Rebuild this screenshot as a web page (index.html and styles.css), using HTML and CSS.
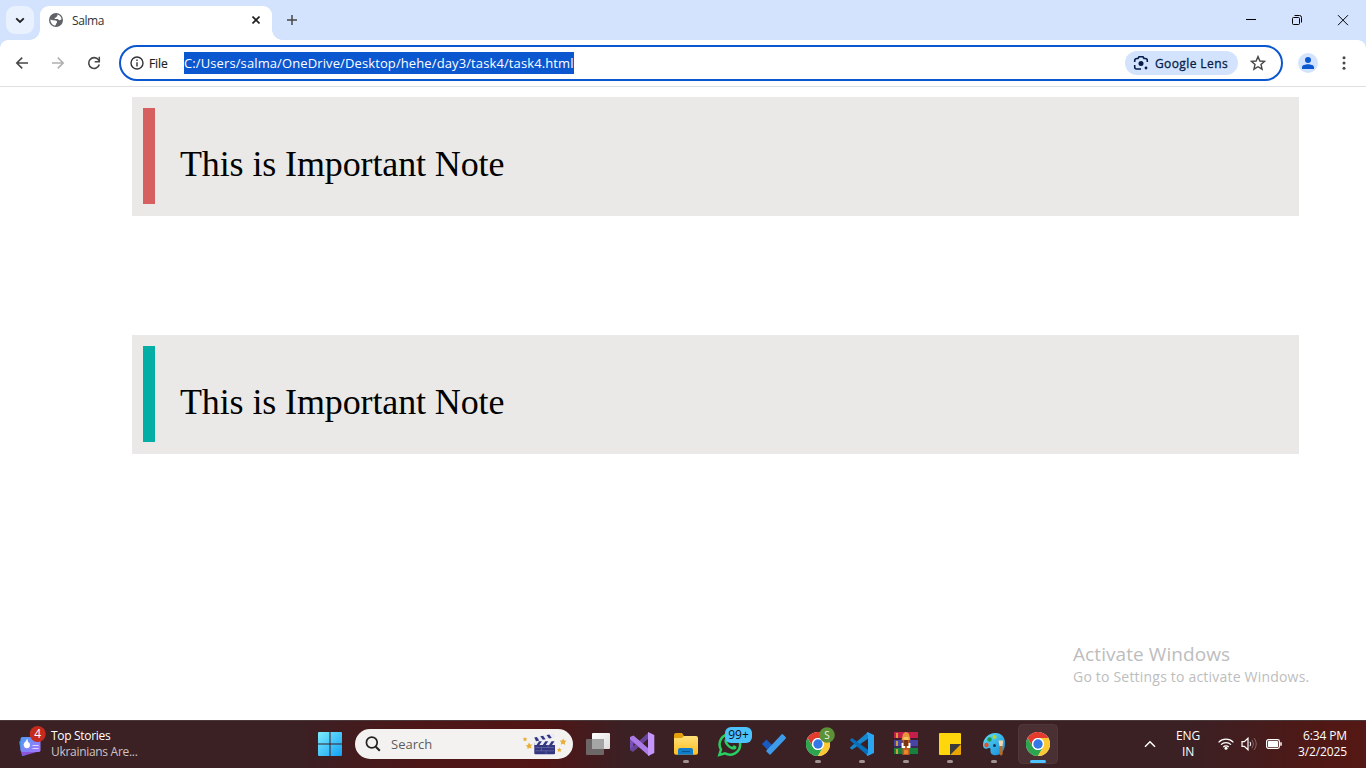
FILE: index.html
```html
<!DOCTYPE html>
<html lang="en">
<head>
<meta charset="utf-8">
<title>Salma</title>
<link rel="stylesheet" href="styles.css">
</head>
<body>
<svg class="defs" width="0" height="0" aria-hidden="true">
  <defs>
    <linearGradient id="win" x1="0" y1="0" x2="1" y2="1"><stop offset="0" stop-color="#7cecfd"/><stop offset="1" stop-color="#12a0f5"/></linearGradient>
    <linearGradient id="folder" x1="0" y1="0" x2="0" y2="1"><stop offset="0" stop-color="#ffe07a"/><stop offset="1" stop-color="#ffbe1e"/></linearGradient>
    <linearGradient id="news" x1="0" y1="0" x2="1" y2="1"><stop offset="0" stop-color="#4d9cf5"/><stop offset="1" stop-color="#a874ff"/></linearGradient>
    <linearGradient id="paint" x1="0" y1="0" x2="1" y2="1"><stop offset="0" stop-color="#5fe0f8"/><stop offset="1" stop-color="#1489d8"/></linearGradient>
    <linearGradient id="view" x1="0" y1="0" x2="1" y2="1"><stop offset="0" stop-color="#ffffff"/><stop offset="1" stop-color="#dcdcdc"/></linearGradient>
    <symbol id="chrome" viewBox="0 0 24 24">
      <circle cx="12" cy="12" r="12" fill="#fff"/>
      <path d="M1.6 6A12 12 0 0 1 22.4 6H12a6 6 0 0 0-5.2 9z" fill="#e33b2e"/>
      <path d="M1.6 6A12 12 0 0 0 12 24l5.2-9a6 6 0 0 1-10.4 0z" fill="#2da44e"/>
      <path d="M22.4 6A12 12 0 0 1 12 24l5.2-9A6 6 0 0 0 12 6z" fill="#fcc934"/>
      <circle cx="12" cy="12" r="5.9" fill="#fff"/><circle cx="12" cy="12" r="4.7" fill="#3478e8"/>
    </symbol>
  </defs>
</svg>
<div class="screen">
  <header class="tabstrip">
    <button class="tab-search"><svg width="10" height="7" viewBox="0 0 10 7"><path d="M1.2 1.3 5 5l3.8-3.7" fill="none" stroke="#1f1f1f" stroke-width="1.8"/></svg></button>
    <div class="tab">
      <svg class="globe" width="14" height="14" viewBox="0 0 14 14"><circle cx="7" cy="7" r="7" fill="#5f6368"/><path d="M8.300 1.500C10.500 2 12.300 3.700 12.600 6.200L10.800 7.200C9.800 7.300 9.400 6.500 8.700 6H5.800L5.600 4.900C6.400 4.600 7.400 4.800 7.700 3.600 8.500 3.300 8.700 2.500 8.300 1.500ZM1.400 6.400 3.800 7.300 6.500 7.500C7.800 7.800 8.400 8.700 7.900 9.700 7 10.200 7.200 11.500 6.300 12.500 3.500 12.300 1.400 9.800 1.400 6.400Z" fill="#fff"/></svg>
      <span class="tab-title">Salma</span>
      <svg class="tab-close" width="8" height="8" viewBox="0 0 8 8"><path d="M.5.5l7 7M7.500.5l-7 7" stroke="#1f1f1f" stroke-width="1.600"/></svg>
    </div>
    <svg class="new-tab" width="10" height="10" viewBox="0 0 10 10"><path d="M5 0v10M0 5h10" stroke="#474747" stroke-width="1.500"/></svg>
    <div class="window-controls">
      <svg width="46" height="40" viewBox="0 0 46 40"><path d="M18 19.500h10" stroke="#000"/></svg>
      <svg width="46" height="40" viewBox="0 0 46 40"><g fill="none" stroke="#000"><rect x="18.500" y="17.500" width="7" height="7" rx="1"/><path d="M20.500 15.500H25.500A2 2 0 0 1 27.500 17.500V22.500"/></g></svg>
      <svg width="46" height="40" viewBox="0 0 46 40"><path d="M18 15.200l10 10M28 15.200l-10 10" stroke="#000"/></svg>
    </div>
  </header>
  <nav class="toolbar">
    <svg class="nav-icon" width="14" height="14" viewBox="0 0 14 14"><path d="M13 7H2M7.200 1.600 1.800 7l5.400 5.400" fill="none" stroke="#474747" stroke-width="1.600"/></svg>
    <svg class="nav-icon" width="14" height="14" viewBox="0 0 14 14"><path d="M1 7h11M6.800 1.600 12.200 7l-5.400 5.400" fill="none" stroke="#b0b0b0" stroke-width="1.600"/></svg>
    <svg class="nav-icon" width="14" height="14" viewBox="0 0 14 14"><path d="M12.300 8.500A5.400 5.400 0 1 1 11.500 3.900L12.700 5" fill="none" stroke="#474747" stroke-width="1.600"/><path d="M12.300.8v4.900H7.700" fill="none" stroke="#474747" stroke-width="1.500"/></svg>
    <div class="omnibox">
      <svg width="14" height="14" viewBox="0 0 14 14"><circle cx="7" cy="7" r="6" fill="none" stroke="#303236" stroke-width="1.400"/><path d="M7 6.200v4.200M7 3.400v1.500" stroke="#303236" stroke-width="1.400"/></svg>
      <span class="scheme">File</span>
      <span class="url">C:/Users/salma/OneDrive/Desktop/hehe/day3/task4/task4.html</span>
      <div class="lens">
        <svg width="16" height="16" viewBox="0 0 16 16"><path d="M1.700 7V5.500A2 2 0 0 1 3.700 3.500H5L6 1.800h4l1 1.700h1.300a2 2 0 0 1 2 2V7M1.700 10v2a2 2 0 0 0 2 2H8" fill="none" stroke="#041e49" stroke-width="1.600"/><circle cx="8" cy="8.500" r="2.500" fill="#041e49"/><circle cx="13" cy="13" r="1.400" fill="#041e49"/></svg>
        <span>Google Lens</span>
      </div>
      <svg class="star" width="16" height="16" viewBox="0 0 16 16"><path d="M8 1.600 9.900 6l4.700.4L11 9.500l1.100 4.700L8 11.700l-4.100 2.500L5 9.500 1.400 6.400 6.100 6z" fill="none" stroke="#474747" stroke-width="1.400"/></svg>
    </div>
    <svg class="avatar" width="20" height="20" viewBox="0 0 20 20"><circle cx="10" cy="10" r="10" fill="#d3e3fd"/><circle cx="10" cy="7" r="3" fill="#0b57d0"/><path d="M4 16v-1.800C4 12.200 7.500 11.300 10 11.300s6 .9 6 2.900V16z" fill="#0b57d0"/></svg>
    <svg class="menu" width="4" height="14" viewBox="0 0 4 14" fill="#474747"><circle cx="2" cy="1.800" r="1.500"/><circle cx="2" cy="7" r="1.500"/><circle cx="2" cy="12.200" r="1.500"/></svg>
  </nav>

  <main class="page">
    <section class="note note-danger"><p>This is Important Note</p></section>
    <section class="note note-info"><p>This is Important Note</p></section>
    <aside class="watermark"><div class="wm-title">Activate Windows</div><div class="wm-text">Go to Settings to activate Windows.</div></aside>
  </main>

  <footer class="taskbar">
    <div class="widgets">
      <svg width="30" height="40" viewBox="0 -4 30 40"><path d="M2 14 7 9l2 18-4 1z" fill="#2788c9"/><path d="M3.500 19 20 15l3.500 8-18 5z" fill="#8a55dc"/><rect x="3.500" y="9" width="20" height="15" rx="2" fill="url(#news)"/><path d="M10 10.500c-.2 3-4 4-3.200 7.200C7.600 21.300 13 21 13 17c0-1.500-.8-2-1-3-.8.300-1 .8-1 1.200.2-2-.4-3.700-1-4.700z" fill="#fff"/><path d="M15.500 17.500h6M15.500 20.500h6" stroke="#e3d5ff" stroke-width="1.200"/><circle cx="20.700" cy="6" r="8" fill="#c42b1c"/><text class="badge-text" x="20.700" y="10.300" fill="#fff">4</text></svg>
      <div class="widget-copy"><div class="wt">Top Stories</div><div class="ws">Ukrainians Are...</div></div>
    </div>
    <svg class="start" width="24" height="24" viewBox="0 0 24 24" fill="url(#win)"><path d="M0 1q0-1 1-1h10.500v11.500H0zM12.500 0H23q1 0 1 1v10.500H12.500zM0 12.500h11.500V24H1q-1 0-1-1zM12.500 12.500H24V23q0 1-1 1H12.500z"/></svg>
    <div class="search">
      <svg width="16" height="16" viewBox="0 0 16 16"><circle cx="6.800" cy="6.500" r="5.400" fill="none" stroke="#222" stroke-width="1.700"/><path d="M10.800 10.800l4 4" stroke="#222" stroke-width="2"/></svg>
      <span>Search</span>
      <svg class="clapper" width="46" height="24" viewBox="0 0 46 24">
        <g fill="#e9ae38"><path d="M7 10.500l1 2.100 2.400-.2-1.500 1.900.8 2.300-2.300-.8-1.900 1.500v-2.400l-2-1.300 2.300-.7zM3 5l.7 1.300 1.700.1-1.200 1.200.3 1.700-1.500-.7-1.500.7.300-1.700L.6 6.400l1.700-.1zM41.300 6.500l.9 2.100 2.300.2-1.700 1.700.4 2.400-2.100-1.100-2.200 1 .4-2.300-1.600-1.700 2.300-.3zM37.300 15.500l.7 1.400 1.600.2-1.100 1.200.3 1.600-1.500-.7-1.500.7.300-1.600-1.100-1.300 1.600-.1z"/></g>
        <path d="M12.300 11H33V21.300q0 1-1 1H13.300q-1 0-1-1z" fill="#34367f"/>
        <path d="M13.500 15.500h18.500M13.500 18.800h18.500M19.500 15.500v3.300M26 12.500V15.500M24 18.800v3" stroke="#7079b4" stroke-width=".6"/>
        <path d="M12.300 5.500 32 1.500l.8 3.700L13 9.500z" fill="#e9ebf5"/><path d="M12.300 9.300H33v3.700H12.300z" fill="#e9ebf5"/>
        <path d="M12.300 5.500l2.500-.5 2.500 3.500-3.200.8zM18.300 4.300l2.800-.6 2.500 3.500-2.800.6zM24.500 3l2.800-.6 2.500 3.500-2.800.6zM14.500 13l2.500-3.700h2.900L17.400 13zM20.800 13l2.500-3.700h2.900L23.700 13zM27.100 13l2.500-3.700h2.900L30 13z" fill="#34367f"/>
      </svg>
    </div>
    <div class="apps">
      <svg class="app" viewBox="0 0 44 48"><rect x="16" y="13" width="18" height="16" rx="1" fill="url(#view)"/><rect x="10" y="19" width="18" height="16" rx="1" fill="#6d6867"/><path d="M16 19h12v10H16z" fill="#a6a5a5"/></svg>
      <svg class="app" viewBox="0 0 44 48"><path d="M10 18l3-2 17 14v6L13.500 23 13 31l-3-1z" fill="#7851b5"/><path d="M10 30l3 2L29 18v-6L10 29z" fill="#694599"/><path d="M10 17l3.500-1.500L29 29v7L10 19z" fill="#ad7be5"/><path d="M28 12l6.300 3v18L28 36z" fill="#c596fa"/></svg>
      <svg class="app" viewBox="0 0 44 48"><path d="M10 15q0-2 2-2h6l2 3v4H10z" fill="#e3a009"/><path d="M10 18h8l2-2h12q2 0 2 2v15q0 1.700-2 1.700H12q-2 0-2-1.700z" fill="url(#folder)"/><path d="M14 34.700V30q0-2 2-2h11q2 0 2 2v4.700z" fill="#117cc9"/><path d="M18 31.500h8" stroke="#075493"/><rect x="19" y="40" width="6" height="3" rx="1.500" fill="#a09294"/></svg>
      <svg class="app" viewBox="0 0 44 48"><path d="M11.300 35 13 29.500A10.300 10.300 0 1 1 17 33.400z" fill="none" stroke="#29ce62" stroke-width="2.500"/><path d="M17 19c1.500-2 2.700-.8 3.300 1.500L19.200 22c1.500 3 3 4 5 4.800l1.500-1.600c3 1 3.200 1.800 2.500 3.200-2 2.500-6 .8-8.700-2-2.500-2.600-4-5.400-2.500-7.400z" fill="#29ce62"/><rect x="17" y="7" width="27" height="16" rx="6" fill="#4cc2ff"/><text class="badge-text" x="30.500" y="19.200" fill="#111">99+</text></svg>
      <svg class="app" viewBox="0 0 44 48"><path d="M10 24l4.500-4.500 7.700 7.700-4.500 5z" fill="#185abd"/><path d="M17.500 34.500 14 31 29.500 14.500q.8-.8 1.600 0l2.500 2.600q.8.800 0 1.600L19 34q-.8 1-1.500.5z" fill="#3e9bea"/></svg>
      <svg class="app" viewBox="0 0 44 48"><use href="#chrome" x="10" y="12" width="24" height="24"/><circle cx="31" cy="15" r="7.800" fill="#5c9138"/><text class="s-text" x="31" y="18.500" fill="#e9f3e4">S</text><rect x="19" y="40" width="6" height="3" rx="1.500" fill="#a09294"/></svg>
      <svg class="app" viewBox="0 0 44 48"><path d="M28 12l-17.500 15q-.8.800 0 1.500l1.500 1.300L29 18z" fill="#1687cf"/><path d="M28 36 10.500 20.700q-.8-.8 0-1.500L12 18l17 12.500z" fill="#0870bb"/><path d="M27.500 12 34 15v18l-6.500 3-1-1.500 1.500-1.500V15l-1.500-1.500z" fill="#2ba5ef"/><rect x="19" y="40" width="6" height="3" rx="1.500" fill="#a09294"/></svg>
      <svg class="app" viewBox="0 0 44 48"><rect x="10" y="12" width="24" height="7" fill="#c51e4b"/><rect x="10" y="20" width="24" height="7.500" fill="#4844a5"/><rect x="10" y="28" width="24" height="7" fill="#18803d"/><path d="M13 13v5M13 21v5M13 29v5" stroke="#d6a83b" stroke-width="1.800"/><path d="M10 18.500h24M10 26.800h24M10 34.500h24" stroke="#29152b" stroke-width=".8"/><rect x="18.500" y="19" width="7" height="16" fill="#c25b20"/><path d="M19 14q3-4 6 0l1.500 6h-9z" fill="#e6953a"/><path d="M19.500 17h5v3h-5z" fill="#f5c162"/><path d="M20 20h4v6h-4z" fill="#7a3511"/><path d="M18.500 23v4h2.500M25.500 23v4H23" fill="none" stroke="#fff" stroke-width="1.800"/><path d="M20 30h4v4h-4z" fill="#ec862c"/><rect x="19" y="40" width="6" height="3" rx="1.500" fill="#a09294"/></svg>
      <svg class="app" viewBox="0 0 44 48"><path d="M11 14q0-1 1-1h20q1 0 1 1v10L22 35H12q-1 0-1-1z" fill="#ffd50b"/><path d="M33 24v10q0 1-1 1H22z" fill="#e9a600"/><path d="M22 24h11L22 35z" fill="#3b3b3b"/><rect x="19" y="40" width="6" height="3" rx="1.500" fill="#a09294"/></svg>
      <svg class="app" viewBox="0 0 44 48"><path d="M23 13c6-.5 10 4 10 9.500 0 5-1 8-4 11-2 1.500-5 2-7.500 1.500-3.500-1-3-4-3-5.500s-1-2-2.500-1.300c-3 1.500-5 0-5-3.200C11 18 17 13 23 13z" fill="url(#paint)"/><circle cx="17.500" cy="19.500" r="2.200" fill="#1e9b45"/><circle cx="22.500" cy="17" r="2" fill="#b4d229"/><circle cx="14.500" cy="25" r="2.200" fill="#ea4f25"/><circle cx="22.500" cy="25.500" r="1.500" fill="#15345b"/><path d="M26.500 20.500h4.700l-.7 6h-3z" fill="#f2d7b0"/><path d="M27.400 26h3l.3 8q-1.500 3-3 0z" fill="#b86b22"/><rect x="19" y="40" width="6" height="3" rx="1.500" fill="#a09294"/></svg>
      <svg class="app" viewBox="0 0 44 48"><rect x="2.500" y="4.500" width="39" height="39" rx="4" fill="#4a3033" stroke="#503739"/><use href="#chrome" x="10" y="12" width="24" height="24"/><rect x="14" y="40" width="16" height="3" rx="1.500" fill="#4cc2ff"/></svg>
    </div>
    <div class="tray">
      <svg width="12" height="8" viewBox="0 0 12 8"><path d="M1 6.700 6 1.700l5 5" fill="none" stroke="#fff" stroke-width="1.500"/></svg>
      <div class="lang"><div>ENG</div><div>IN</div></div>
      <svg width="16" height="14" viewBox="0 0 16 14"><g fill="none" stroke="#fff" stroke-width="1.200"><path d="M.6 5.300a10.400 10.400 0 0 1 14.800 0M3 7.700a7 7 0 0 1 10 0M5.300 10a3.800 3.800 0 0 1 5.400 0"/></g><circle cx="8" cy="11.300" r="1.500" fill="#fff"/></svg>
      <svg class="vol" width="16" height="14" viewBox="0 0 16 14" fill="none"><path d="M1 4.700h2.300L7 1.200v11.600L3.300 9.300H1z" stroke="#fff" stroke-width="1.200"/><path d="M9 4.800q1.500 2.200 0 4.400" stroke="#fff"/><path d="M11 2.800q3 4.200 0 8.400M13 1q4.500 6 0 12" stroke="#806866"/></svg>
      <svg class="battery" width="16" height="10" viewBox="0 0 16 10"><rect x=".6" y=".6" width="12.800" height="8.800" rx="1.800" fill="none" stroke="#fff" stroke-width="1.200"/><rect x="2" y="2" width="10" height="6" rx=".6" fill="#fff"/><path d="M15 3.300v3.400" stroke="#fff" stroke-width="1.500"/></svg>
      <div class="clock"><div class="time">6:34 PM</div><div class="date">3/2/2025</div></div>
    </div>
  </footer>
</div>
</body>
</html>
```
FILE: styles.css
```css
* { box-sizing: border-box; }
body { margin: 0; overflow: hidden; font-family: "Open Sans", "Noto Sans", sans-serif; font-size: 12px; }
svg { display: block; flex: none; }
button { border: 0; padding: 0; }
.defs { position: absolute; }
.screen { width: 1366px; height: 768px; display: flex; flex-direction: column; background: #fff; white-space: nowrap; }

.tabstrip { height: 40px; flex: none; display: flex; align-items: flex-start; background: #d3e3fd; padding-left: 6px; }
.tab-search { width: 28px; height: 28px; margin-top: 6px; display: flex; align-items: center; justify-content: center; border-radius: 9px; background: #e9f1fe; }
.tab { position: relative; width: 232px; height: 34px; margin: 6px 0 0 6px; padding: 0 12px 6px 9px; display: flex; align-items: center; background: #fff; border-radius: 9px 9px 0 0; }
.tab::before, .tab::after { content: ""; position: absolute; bottom: 0; width: 10px; height: 10px; }
.tab::before { left: -10px; background: radial-gradient(circle at 0 0, transparent 9.500px, #fff 10px); }
.tab::after { right: -10px; background: radial-gradient(circle at 100% 0, transparent 9.500px, #fff 10px); }
.tab-title { margin-left: 9px; color: #303236; letter-spacing: -.4px; }
.tab-close { margin-left: auto; }
.new-tab { margin: 15px 0 0 15px; }
.window-controls { display: flex; margin-left: auto; }

.toolbar { position: relative; height: 47px; flex: none; display: flex; align-items: center; padding: 0 20px 0 15px; background: #fff; border-bottom: 1px solid #dedfe1; }
.toolbar::before { content: ""; position: absolute; inset: 0 0 auto; height: 8px; background: radial-gradient(circle at 8px 8px, transparent 7.500px, #d3e3fd 8px) left / 8px 8px no-repeat, radial-gradient(circle at 0 8px, transparent 7.500px, #d3e3fd 8px) right / 8px 8px no-repeat; }
.nav-icon { margin-right: 22px; }
.omnibox { width: 1164px; height: 36px; margin-left: -4px; padding: 0 15px 0 9px; border: 2px solid #0b57d0; border-radius: 18px; display: flex; align-items: center; }
.scheme { width: 35px; margin-left: 5px; color: #1f1f1f; -webkit-text-stroke: .2px; letter-spacing: -.1px; }
.url { height: 22px; line-height: 22px; font-size: 13px; letter-spacing: .11px; background: #0b57d0; color: #fff; }
.lens { width: 113px; height: 24px; margin-left: auto; padding-left: 8px; border-radius: 12px; background: #d3e3fd; display: flex; align-items: center; gap: 6px; color: #041e49; letter-spacing: .4px; -webkit-text-stroke: .3px; }
.star { margin-left: 12px; }
.avatar { margin-left: 15px; }
.menu { margin-left: auto; }

.page { position: relative; flex: 1; padding: 9.600px 67px 0 132px; }
.note { height: 119px; padding: 11.400px; background: #eae9e7; font: 36px "Liberation Serif", "Times New Roman", serif; letter-spacing: -.12px; }
.note + .note { margin-top: 119.200px; }
.note p { height: 96px; margin: 0; border-left: 12.500px solid; padding: 35px 0 0 24.600px; line-height: 42px; }
.note p::first-line { color: #000; }
.note-danger p { border-color: #d66060; }
.note-info p { border-color: #05aea5; }
.watermark { position: absolute; left: 1073px; top: 554px; color: #bdbdbd; }
.wm-title { font-size: 19px; line-height: 26px; letter-spacing: .08px; }
.wm-text { font-size: 14px; line-height: 19px; letter-spacing: .2px; }

.taskbar { height: 48px; flex: none; display: flex; align-items: center; box-shadow: inset 0 1px #49393a; background: linear-gradient(90deg, #3b2024 0, #3b2024 300px, #4c1718 410px, #511515 540px, #3b2024 625px, #3b2024 1190px, #501815 1320px, #551814); color: #fff; }
.widgets { width: 317px; display: flex; align-items: center; padding-left: 17px; }
.widget-copy { margin-left: 4px; line-height: 16px; font-size: 12px; }
.wt { letter-spacing: -.3px; }
.ws { color: #cdc3c4; letter-spacing: -.3px; }
.badge-text { font-size: 12px; text-anchor: middle; }
.s-text { font-size: 10px; text-anchor: middle; }
.start { margin-left: 1px; }
.search { width: 218px; height: 30px; margin-left: 13px; padding: 0 5px 0 10px; border-radius: 15px; background: #f3f2f1; display: flex; align-items: center; color: #5e5c5b; }
.search span { margin-left: 10px; font-size: 13px; }
.clapper { margin-left: auto; }
.apps { display: flex; margin-left: 3px; }
.app { width: 44px; height: 48px; }
.tray { flex: 1; display: flex; align-items: center; padding: 0 19px 0 84px; }
.lang { width: 34px; margin: 0 13px 0 15px; text-align: center; line-height: 16px; font-size: 12px; letter-spacing: -.2px; }
.vol { margin-left: 7px; }
.battery { margin-left: 9px; }
.clock { margin-left: auto; text-align: right; line-height: 16px; letter-spacing: -.12px; }
```
